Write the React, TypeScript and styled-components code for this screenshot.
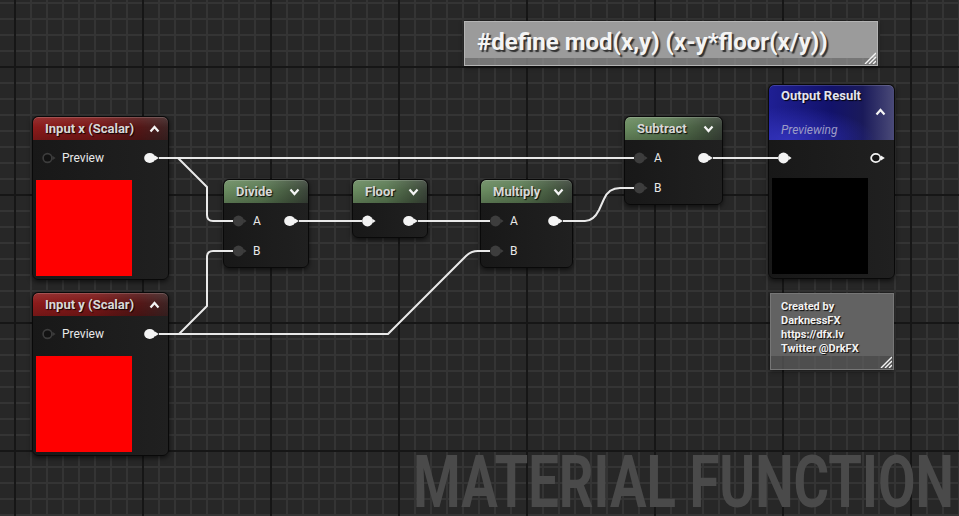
import React from 'react';
import styled, { createGlobalStyle } from 'styled-components';

const GlobalStyle = createGlobalStyle`
  html, body { margin: 0; padding: 0; background: #272727; }
  body { font-family: Roboto, "Noto Sans", "Liberation Sans", sans-serif; }
`;

const Canvas = styled.div`
  position: relative;
  width: 959px;
  height: 516px;
  overflow: hidden;
  display: flex;
  align-items: flex-end;
  justify-content: flex-end;
  background-color: #272727;
  background-image:
    linear-gradient(to right, #161616 2px, transparent 2px),
    linear-gradient(to bottom, #161616 2px, transparent 2px),
    linear-gradient(to right, #343434 2px, transparent 2px),
    linear-gradient(to bottom, #343434 2px, transparent 2px);
  background-size: 128px 128px, 128px 128px, 16px 16px, 16px 16px;
  background-position: 14px 0, 0 66px, 14px 0, 0 2px;
`;

const Watermark = styled.div`
  font-family: Roboto, "Liberation Sans", sans-serif;
  font-weight: 700;
  font-size: 73px;
  line-height: 60px;
  color: #4a4a4a;
  white-space: nowrap;
  margin: 0 5px 4px 0;
  transform: scaleX(0.745);
  transform-origin: right bottom;
`;

const WireLayer = styled.svg`
  position: absolute;
  left: 0;
  top: 0;
  z-index: 5;
  pointer-events: none;
`;

type Kind = 'input' | 'op' | 'output';

const headerBackgrounds: Record<Kind, string> = {
  input:
    'linear-gradient(180deg, rgba(255,255,255,0.10) 0%, rgba(255,255,255,0) 45%, rgba(0,0,0,0.18) 100%), linear-gradient(90deg, #8c1b1b 0%, #7c1717 45%, #551616 78%, #3e2424 100%)',
  op:
    'linear-gradient(180deg, rgba(255,255,255,0.10) 0%, rgba(255,255,255,0) 45%, rgba(0,0,0,0.18) 100%), linear-gradient(90deg, #6a8b60 0%, #5b7a53 45%, #44573f 80%, #3b443a 100%)',
  output:
    'radial-gradient(ellipse 70% 60% at 15% 100%, rgba(52,52,190,0.9) 0%, rgba(52,52,190,0) 100%), linear-gradient(90deg, #1f1f94 0%, #12126a 50%, #1a1a5a 75%, #4a4a78 100%)',
};

const NodeFrame = styled.div<{ $x: number; $y: number; $w: number }>`
  position: absolute;
  left: ${(p) => p.$x}px;
  top: ${(p) => p.$y}px;
  width: ${(p) => p.$w}px;
  box-sizing: border-box;
  border: 1px solid #090909;
  border-radius: 6px;
  background: linear-gradient(90deg, #181818 0%, #1d1d1d 60%, #202020 100%);
  box-shadow: 0 2px 5px rgba(0, 0, 0, 0.6);
  overflow: hidden;
  z-index: 2;
`;

const Header = styled.div<{ $kind: Kind }>`
  box-sizing: border-box;
  height: ${(p) => (p.$kind === 'output' ? 55 : 23)}px;
  display: flex;
  flex-direction: ${(p) => (p.$kind === 'output' ? 'column' : 'row')};
  align-items: ${(p) => (p.$kind === 'output' ? 'stretch' : 'center')};
  justify-content: ${(p) => (p.$kind === 'output' ? 'flex-start' : 'space-between')};
  padding: ${(p) => (p.$kind === 'output' ? '3px 8px 0 12px' : '1px 8px 0 12px')};
  background: ${(p) => headerBackgrounds[p.$kind]};
  border-radius: 5px 5px 0 0;
  box-shadow: inset 0 1px 0 rgba(255, 255, 255, 0.16);
`;

const Title = styled.span<{ $bright?: boolean }>`
  font-family: Roboto, "Liberation Sans", sans-serif;
  font-weight: 700;
  font-size: 13px;
  line-height: 16px;
  color: ${(p) => (p.$bright ? '#e4e4f0' : '#d8d8d8')};
  text-shadow: 1px 1px 1px rgba(0, 0, 0, 0.9);
  white-space: nowrap;
`;

const ChevronRow = styled.div`
  height: 16px;
  display: flex;
  align-items: center;
  justify-content: flex-end;
`;

const Subtitle = styled.span`
  margin-top: 2px;
  font-family: Roboto, "Liberation Sans", sans-serif;
  font-style: italic;
  font-size: 12px;
  line-height: 16px;
  color: #9c9cc6;
  white-space: nowrap;
`;

const Body = styled.div`
  padding: 3px 0 1px;
`;

const PinRow = styled.div`
  display: flex;
  align-items: center;
  height: 30px;
  padding: 0 9px;
`;

const PinLabel = styled.span`
  margin-left: 6px;
  font-family: Roboto, "Liberation Sans", sans-serif;
  font-size: 12px;
  color: #e8e8e8;
  white-space: nowrap;
`;

const Spacer = styled.div`
  flex: 1;
`;

const Swatch = styled.div<{ $color: string; $mt: number; $mb: number }>`
  width: 96px;
  height: 96px;
  margin: ${(p) => p.$mt}px 0 ${(p) => p.$mb}px 3px;
  background: ${(p) => p.$color};
`;

const IconSvg = styled.svg`
  flex: none;
  display: block;
`;

const CommentFrame = styled.div<{ $x: number; $y: number; $w: number; $h: number; $edge: string }>`
  position: absolute;
  left: ${(p) => p.$x}px;
  top: ${(p) => p.$y}px;
  width: ${(p) => p.$w}px;
  height: ${(p) => p.$h}px;
  box-sizing: border-box;
  display: flex;
  flex-direction: column;
  border: 1px solid ${(p) => p.$edge};
  box-shadow: 0 1px 4px rgba(0, 0, 0, 0.65);
  z-index: 1;
`;

const CommentBody = styled.div<{ $bg: string; $pad: string }>`
  flex: 1;
  background: ${(p) => p.$bg};
  padding: ${(p) => p.$pad};
`;

const CommentStrip = styled.div<{ $h: number; $bg: string }>`
  position: relative;
  height: ${(p) => p.$h}px;
  background: ${(p) => p.$bg};
`;

const Hatch = styled.svg`
  position: absolute;
  right: 1px;
  bottom: 1px;
`;

const DefineText = styled.div`
  font-family: Roboto, "Liberation Sans", sans-serif;
  font-weight: 700;
  font-size: 24px;
  line-height: 31px;
  color: #f4f4f4;
  text-shadow: 2px 2px 1px rgba(30, 30, 30, 0.85);
  white-space: nowrap;
`;

const CreditLine = styled.div`
  font-family: Roboto, "Liberation Sans", sans-serif;
  font-weight: 700;
  font-size: 11px;
  line-height: 14px;
  color: #f2f2f2;
  text-shadow: 1px 1px 1px rgba(0, 0, 0, 0.9);
  white-space: nowrap;
`;

type InTone = 'hollow' | 'grey' | 'white';

function InPin({ tone }: { tone: InTone }) {
  const fill = tone === 'white' ? '#f2f2f2' : tone === 'grey' ? '#3d3d3d' : '#3a3a3a';
  return (
    <IconSvg width={14} height={12} viewBox="0 0 14 12">
      {tone === 'hollow' ? (
        <circle cx={5.5} cy={6} r={4.4} fill="#121212" stroke="#3c3c3c" strokeWidth={1.6} />
      ) : (
        <circle cx={5.5} cy={6} r={5.4} fill={fill} />
      )}
      <polygon points="10.4,3.7 13.6,6 10.4,8.3" fill={fill} />
    </IconSvg>
  );
}

function OutPin({ hollow }: { hollow?: boolean }) {
  return (
    <IconSvg width={15} height={12} viewBox="0 0 15 12">
      {hollow ? (
        <ellipse cx={5.75} cy={6} rx={4.6} ry={4.1} fill="#151515" stroke="#f0f0f0" strokeWidth={1.8} />
      ) : (
        <ellipse cx={5.75} cy={6} rx={5.6} ry={5} fill="#f4f4f4" />
      )}
      <polygon points="10.9,3.6 14.8,6 10.9,8.4" fill="#f4f4f4" />
    </IconSvg>
  );
}

function Chevron({ dir }: { dir: 'up' | 'down' }) {
  return (
    <IconSvg width={11} height={8} viewBox="0 0 11 8">
      <polyline
        points={dir === 'up' ? '1.5,6.5 5.5,2 9.5,6.5' : '1.5,1.5 5.5,6 9.5,1.5'}
        fill="none"
        stroke="#f4f4f4"
        strokeWidth={2.2}
      />
    </IconSvg>
  );
}

type RowSpec = { inTone?: InTone; label?: string; out?: 'solid' | 'hollow' };

type NodeSpec = {
  x: number;
  y: number;
  w: number;
  kind: Kind;
  title: string;
  rows: RowSpec[];
  swatch?: { color: string; mt: number; mb: number };
};

function GraphNode({ x, y, w, kind, title, rows, swatch }: NodeSpec) {
  return (
    <NodeFrame $x={x} $y={y} $w={w}>
      <Header $kind={kind}>
        {kind === 'output' ? (
          <>
            <Title $bright>{title}</Title>
            <ChevronRow>
              <Chevron dir="up" />
            </ChevronRow>
            <Subtitle>Previewing</Subtitle>
          </>
        ) : (
          <>
            <Title>{title}</Title>
            <Chevron dir={kind === 'input' ? 'up' : 'down'} />
          </>
        )}
      </Header>
      <Body>
        {rows.map((r, i) => (
          <PinRow key={i}>
            {r.inTone && <InPin tone={r.inTone} />}
            {r.label && <PinLabel>{r.label}</PinLabel>}
            <Spacer />
            {r.out && <OutPin hollow={r.out === 'hollow'} />}
          </PinRow>
        ))}
        {swatch && <Swatch $color={swatch.color} $mt={swatch.mt} $mb={swatch.mb} />}
      </Body>
    </NodeFrame>
  );
}

const nodes: NodeSpec[] = [
  {
    x: 32, y: 116, w: 137, kind: 'input', title: 'Input x (Scalar)',
    rows: [{ inTone: 'hollow', label: 'Preview', out: 'solid' }],
    swatch: { color: '#ff0000', mt: 7, mb: 2 },
  },
  {
    x: 32, y: 292, w: 137, kind: 'input', title: 'Input y (Scalar)',
    rows: [{ inTone: 'hollow', label: 'Preview', out: 'solid' }],
    swatch: { color: '#ff0000', mt: 7, mb: 2 },
  },
  {
    x: 223, y: 179, w: 86, kind: 'op', title: 'Divide',
    rows: [{ inTone: 'grey', label: 'A', out: 'solid' }, { inTone: 'grey', label: 'B' }],
  },
  {
    x: 352, y: 179, w: 76, kind: 'op', title: 'Floor',
    rows: [{ inTone: 'white', out: 'solid' }],
  },
  {
    x: 480, y: 179, w: 93, kind: 'op', title: 'Multiply',
    rows: [{ inTone: 'grey', label: 'A', out: 'solid' }, { inTone: 'grey', label: 'B' }],
  },
  {
    x: 624, y: 116, w: 99, kind: 'op', title: 'Subtract',
    rows: [{ inTone: 'grey', label: 'A', out: 'solid' }, { inTone: 'grey', label: 'B' }],
  },
  {
    x: 768, y: 84, w: 127, kind: 'output', title: 'Output Result',
    rows: [{ inTone: 'white', out: 'hollow' }],
    swatch: { color: '#000000', mt: 5, mb: 3 },
  },
];

const wires: string[] = [
  'M159,158 L634,158',
  'M159,158 L178,158 L207,187 L207,215 Q207,221 213,221 L233,221',
  'M159,334 L179,334 L207,306 L207,257 Q207,251 213,251 L233,251',
  'M159,334 L388,334 L466,256 Q471,251 478,251 L490,251',
  'M299,221 L362,221',
  'M418,221 L490,221',
  'M563,221 L585,221 C592,221 596,216 599,210 L604,199 C607,192 612,188 620,188 L634,188',
  'M713,158 L778,158',
];

function ResizeHatch() {
  return (
    <Hatch width={12} height={12} viewBox="0 0 12 12">
      <g stroke="#f4f4f4" strokeWidth={1.4}>
        <line x1={12} y1={1} x2={1} y2={12} />
        <line x1={12} y1={5} x2={5} y2={12} />
        <line x1={12} y1={9} x2={9} y2={12} />
      </g>
    </Hatch>
  );
}

export default function App() {
  return (
    <>
      <GlobalStyle />
      <Canvas>
        <CommentFrame $x={464} $y={21} $w={414} $h={45} $edge="#b4b4b4">
          <CommentBody $bg="#9b9b9b" $pad="5px 0 0 12px">
            <DefineText>#define mod(x,y) (x-y*floor(x/y))</DefineText>
          </CommentBody>
          <CommentStrip $h={7} $bg="rgba(150,150,150,0.72)">
            <ResizeHatch />
          </CommentStrip>
        </CommentFrame>

        <CommentFrame $x={770} $y={293} $w={124} $h={77} $edge="#767676">
          <CommentBody $bg="#626262" $pad="6px 0 0 10px">
            <CreditLine>Created by</CreditLine>
            <CreditLine>DarknessFX</CreditLine>
            <CreditLine>https://dfx.lv</CreditLine>
            <CreditLine>Twitter @DrkFX</CreditLine>
          </CommentBody>
          <CommentStrip $h={13} $bg="rgba(96,96,96,0.7)">
            <ResizeHatch />
          </CommentStrip>
        </CommentFrame>

        {nodes.map((n) => (
          <GraphNode key={n.title} {...n} />
        ))}

        <WireLayer width={959} height={516} viewBox="0 0 959 516">
          {wires.map((d, i) => (
            <path key={i} d={d} fill="none" stroke="#e9e9e9" strokeWidth={2} strokeLinejoin="round" />
          ))}
        </WireLayer>

        <Watermark>MATERIAL FUNCTION</Watermark>
      </Canvas>
    </>
  );
}
